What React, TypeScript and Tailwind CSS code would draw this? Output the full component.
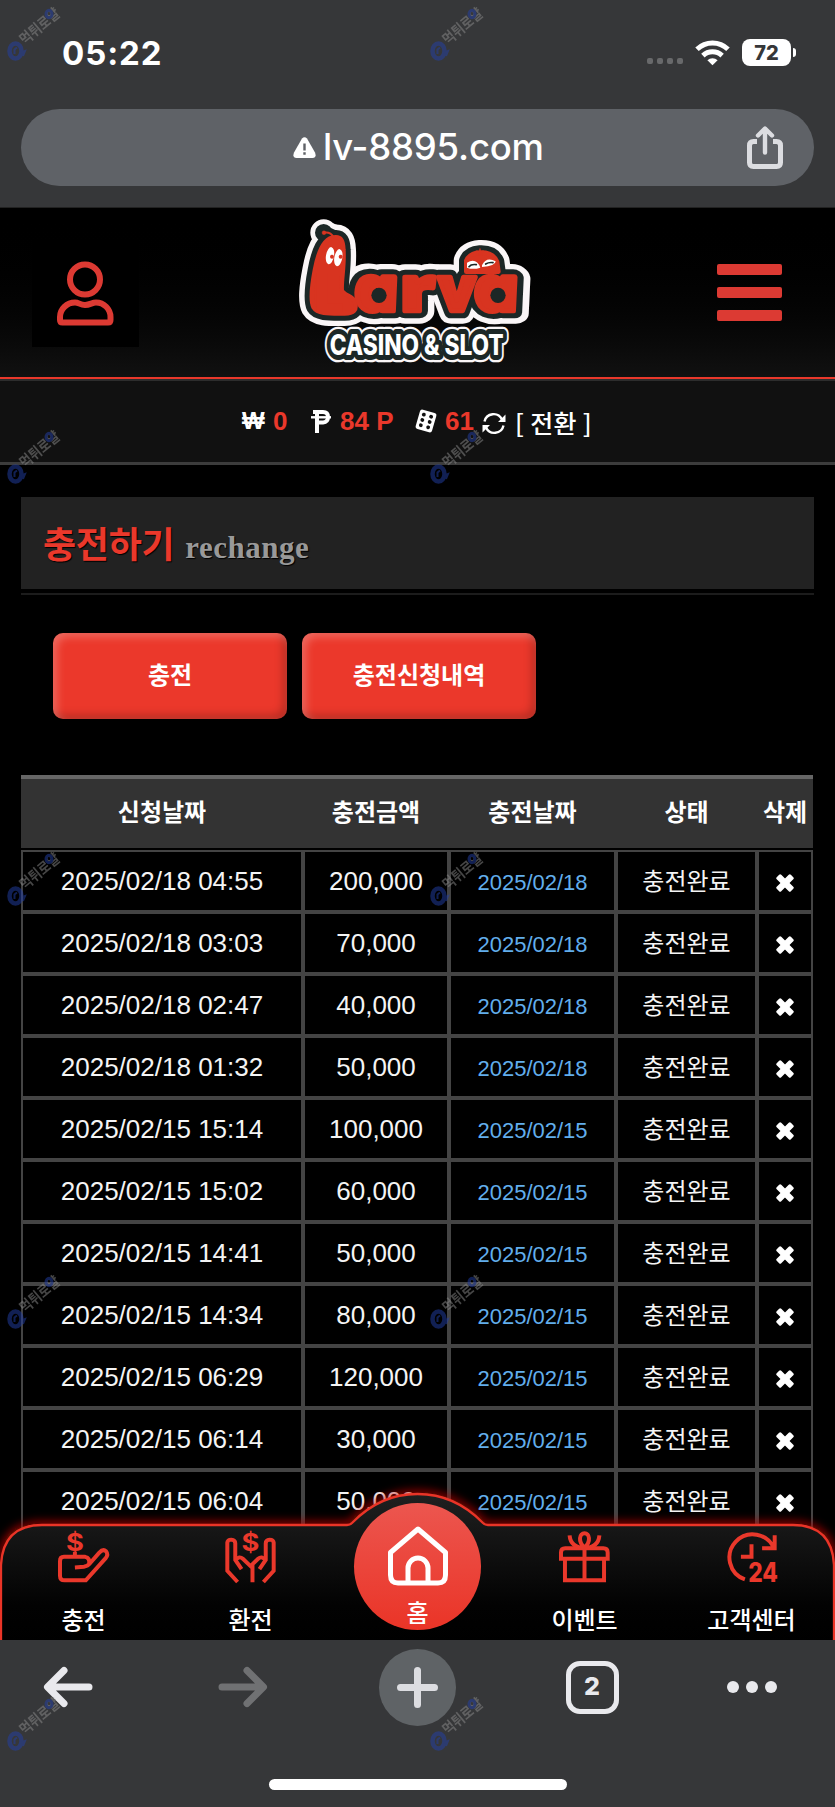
import type { ReactNode } from 'react';

interface Deposit {
  requested: string;
  amount: string;
  date: string;
}

const DEPOSITS: Deposit[] = [
  { requested: '2025/02/18 04:55', amount: '200,000', date: '2025/02/18' },
  { requested: '2025/02/18 03:03', amount: '70,000', date: '2025/02/18' },
  { requested: '2025/02/18 02:47', amount: '40,000', date: '2025/02/18' },
  { requested: '2025/02/18 01:32', amount: '50,000', date: '2025/02/18' },
  { requested: '2025/02/15 15:14', amount: '100,000', date: '2025/02/15' },
  { requested: '2025/02/15 15:02', amount: '60,000', date: '2025/02/15' },
  { requested: '2025/02/15 14:41', amount: '50,000', date: '2025/02/15' },
  { requested: '2025/02/15 14:34', amount: '80,000', date: '2025/02/15' },
  { requested: '2025/02/15 06:29', amount: '120,000', date: '2025/02/15' },
  { requested: '2025/02/15 06:14', amount: '30,000', date: '2025/02/15' },
  { requested: '2025/02/15 06:04', amount: '50,000', date: '2025/02/15' },
];

const COLUMNS = 'grid grid-cols-[282px_146px_167px_141px_56px]';

function StatusBar() {
  return (
    <div className="flex h-[109px] items-start justify-between pl-[62px] pr-[39px] pt-[34px] font-['Inter']">
      <span className="text-[33px] font-bold leading-[38px] tracking-[0.9px] text-white">05:22</span>
      <div className="flex items-center pt-[5px]">
        <div className="mr-[12px] mt-[17px] flex gap-[3.5px]">
          {[0, 1, 2, 3].map((i) => (
            <i key={i} className="size-[6.5px] rounded-[2px] bg-[#68696b]" />
          ))}
        </div>
        <svg className="mr-[12px] h-[26px] w-[35px]" viewBox="0 0 35 26" fill="none" stroke="#fff" strokeWidth="5">
          <path d="M2 9.2a22.3 22.3 0 0 1 31 0" />
          <path d="M7.9 15.6a14 14 0 0 1 19.2 0" />
          <path d="M17.5 25.3 12.4 20.2a7.4 7.4 0 0 1 10.2 0Z" fill="#fff" stroke="none" />
        </svg>
        <div className="flex h-[27px] w-[49px] items-center justify-center rounded-[8px] bg-white text-[20px] font-extrabold text-[#363739]">
          72
        </div>
        <i className="ml-[2px] h-[9px] w-[3px] rounded-r-full bg-white" />
      </div>
    </div>
  );
}

function AddressBar() {
  return (
    <div className="mx-[21px] flex h-[77px] items-center rounded-full bg-[#5f6267] pr-[30px] font-['Inter']">
      <svg className="ml-[272px] h-[21px] w-[23px]" viewBox="0 0 23 21">
        <path d="M9 1.5Q11.5-1 14 1.5L22 15.5Q24 20.500 19.500 21H3.500Q-1 20.500 1 15.500Z" fill="#fff" />
        <path d="M11.500 6.500v7M11.500 15.300v2.400" stroke="#5f6267" strokeWidth="2.400" />
      </svg>
      <span className="ml-[7px] text-[36.500px] font-medium leading-none tracking-[-0.2px] text-white">lv-8895.com</span>
      <svg className="ml-auto h-[44px] w-[38px]" viewBox="0 0 38 44" fill="none" stroke="#dcdde1" strokeWidth="5" strokeLinecap="round" strokeLinejoin="round">
        <path d="M19 26.500V4M12 9.500l7-7 7 7" strokeWidth="4.400" />
        <path d="M11 15.500H7.500Q3.500 15.500 3.500 19.500v17Q3.500 40.500 7.500 40.500h23Q34.500 40.500 34.500 36.500v-17Q34.500 15.500 30.500 15.500H27" strokeLinecap="butt" />
      </svg>
    </div>
  );
}

function Logo() {
  return (
    <svg className="h-[150px] w-[240px]" viewBox="55 48 720 450" strokeLinejoin="round" strokeLinecap="round">
      <defs>
        {/* shared by the white, dark and red layers */}
        <g id="larva">
          <path d="M165 112C132 114 116 155 106 210C96 262 92 302 102 322C114 342 150 340 195 340C222 340 232 330 226 306C219 286 190 287 186 270C184 240 194 200 191 150C190 122 184 110 165 112Z" />
          <path d="M560 215V182Q570 160 600 158Q640 156 652 185L656 215Z" />
          <g fontFamily="'Open Sans', sans-serif" fontWeight="800" fontSize="186">
            <text transform="translate(233 334) skewX(12)" fontStyle="italic" textLength="136" lengthAdjust="spacingAndGlyphs">a</text>
            <text x="362" y="334" textLength="104" lengthAdjust="spacingAndGlyphs">r</text>
            <text x="476" y="334" textLength="112" lengthAdjust="spacingAndGlyphs">v</text>
            <text transform="translate(591 334) skewX(12)" fontStyle="italic" textLength="138" lengthAdjust="spacingAndGlyphs">a</text>
          </g>
        </g>
        <text id="slot" x="150" y="466" fontFamily="Inter" fontWeight="800" fontSize="86" textLength="522" lengthAdjust="spacingAndGlyphs">
          CASINO &amp; SLOT
        </text>
      </defs>
      <g fill="#faf6f7" stroke="#faf6f7">
        <use href="#larva" strokeWidth="76" />
        <circle cx="132" cy="98" r="18" strokeWidth="44" />
        <path d="M132 98L165 112" strokeWidth="74" />
        <use href="#slot" strokeWidth="44" />
      </g>
      <g fill="#1c2726" stroke="#1c2726">
        <use href="#larva" strokeWidth="44" />
        <circle cx="132" cy="98" r="12" strokeWidth="28" />
        <path d="M132 98L162 112" strokeWidth="44" />
        <use href="#slot" strokeWidth="30" />
      </g>
      <g fill="#d83420" stroke="#d83420">
        <use href="#larva" strokeWidth="14" />
        <path d="M133 98Q152 94 162 112" fill="none" strokeWidth="6" />
        <circle cx="133" cy="98" r="6" />
      </g>
      <text x="104" y="335" fontFamily="Inter" fontWeight="900" fontSize="160" fill="#d83420">L</text>
      <circle cx="298" cy="286" r="23" fill="#1c2726" />
      <circle cx="655" cy="286" r="23" fill="#1c2726" />
      <use href="#slot" fill="#fff" />
      {/* eyes */}
      <ellipse cx="151" cy="167" rx="12" ry="26" fill="#fff" transform="rotate(10 151 167)" />
      <ellipse cx="176" cy="173" rx="12" ry="26" fill="#fff" transform="rotate(10 176 173)" />
      <circle cx="157" cy="170" r="6" fill="#d83420" />
      <circle cx="183" cy="170" r="6" fill="#d83420" />
      <path d="M562 188Q590 172 602 203Q580 210 562 203Z" fill="#fff" />
      <path d="M607 196Q620 168 648 184Q648 198 607 201Z" fill="#fff" />
      <path d="M592 153l2 12M601 147v18M610 153l-4 12" stroke="#d83420" strokeWidth="4" />
      <path d="M568 200Q574 192 590 194M618 192Q628 186 640 188" stroke="#1c2726" strokeWidth="5" fill="none" />
    </svg>
  );
}

function Header() {
  return (
    <header className="flex h-[169px] items-start bg-linear-to-b from-black to-[#111] pl-[32px]">
      <div className="mt-[32px] size-[107px] bg-black">
        <svg viewBox="0 0 107 107" fill="none" stroke="#dc3a33" strokeWidth="6">
          <circle cx="53" cy="39.500" r="15" />
          <path d="M28 80V77C28 69 35 62.500 43 62.500C47 62.500 48 65 53 65C58 65 60 62.500 64 62.500C72 62.500 78.500 69 78.500 77V80Q78.500 82.500 76 82.500H30.500Q28 82.500 28 80Z" />
        </svg>
      </div>
      <div className="ml-[159px] mt-[8px]"><Logo /></div>
      <div className="ml-[179px] mt-[56px] flex flex-col gap-[12px]">
        <i className="h-[11px] w-[65px] rounded-[2px] bg-[#dc3a33]" />
        <i className="h-[11px] w-[65px] rounded-[2px] bg-[#dc3a33]" />
        <i className="h-[11px] w-[65px] rounded-[2px] bg-[#dc3a33]" />
      </div>
    </header>
  );
}

function Balance() {
  return (
    <div className="flex h-[88px] items-center border-b-[3px] border-t-2 border-b-[#3c3c3c] border-t-[#ea382b] bg-[#111] pl-[242px] pt-[1px] text-[26px] font-bold text-[#ea382b] shadow-[inset_0_2px_0_#2d2d2d]">
      <span className="w-[23px] text-[24px] text-white">₩</span>
      <span className="ml-[8px] w-[38px]">0</span>
      <svg className="h-[24px] w-[20px]" viewBox="0 0 20 24" fill="none" stroke="#fff" strokeWidth="4">
        <path d="M2 3H12Q17 3 17 8T12 13.500H6M6 3V24" />
        <path d="M0 8.300H20" strokeWidth="2.400" />
      </svg>
      <span className="ml-[9px] w-[75px]">84 P</span>
      <svg className="h-[24px] w-[22px]" viewBox="0 0 22 24">
        <g transform="rotate(16 11 12)">
          <rect x="2.500" y="2" width="17" height="20" rx="2.500" fill="#fff" />
          <g fill="#111">
            <circle cx="7.200" cy="6.500" r="1.900" /><circle cx="14.800" cy="6.500" r="1.900" />
            <circle cx="7.200" cy="12" r="1.900" /><circle cx="14.800" cy="12" r="1.900" />
            <circle cx="7.200" cy="17.500" r="1.900" /><circle cx="14.800" cy="17.500" r="1.900" />
          </g>
        </g>
      </svg>
      <span className="ml-[8px] w-[37px]">61</span>
      <svg className="mt-[4px] h-[23px] w-[24px]" viewBox="0 0 24 23" fill="none" stroke="#fff" strokeWidth="2.400">
        <path d="M2.500 9.500A9.300 9.300 0 0 1 20 7.500M21.500 13.500A9.300 9.300 0 0 1 4 15.500" />
        <path d="M23.500 2.500V10H16ZM.5 20.500V13H8Z" fill="#fff" stroke="none" />
      </svg>
      <span className="ml-[9px] pt-[3px] text-[25px] font-medium tracking-[0.3px] text-white font-['Noto_Sans_CJK_KR',sans-serif]">[ 전환 ]</span>
    </div>
  );
}

function ActionButton({ children }: { children: ReactNode }) {
  return (
    <button className="h-[86px] w-[234px] rounded-[10px] bg-[#eb382b] text-[24px] font-bold text-white shadow-[inset_4px_4px_8px_rgba(255,255,255,0.25),inset_-4px_-4px_8px_rgba(0,0,0,0.22)]">
      {children}
    </button>
  );
}

function DeleteIcon() {
  return (
    <svg className="mt-[3px] size-[18px]" viewBox="0 0 18 18" fill="#fff">
      <rect x="-1" y="5.800" width="20" height="6.400" rx="1.500" transform="rotate(45 9 9)" />
      <rect x="-1" y="5.800" width="20" height="6.400" rx="1.500" transform="rotate(-45 9 9)" />
    </svg>
  );
}

function DepositTable() {
  const cell = 'flex items-center justify-center border-2 border-[#444]';
  return (
    <div className="mx-[21px] mt-[56px] w-[792px]">
      <div className={`${COLUMNS} mb-[2px] h-[73px] items-center border-t-4 border-[#666] bg-[#333] pb-[1px] text-center text-[24px] font-bold text-white`}>
        <span>신청날짜</span>
        <span>충전금액</span>
        <span>충전날짜</span>
        <span>상태</span>
        <span>삭제</span>
      </div>
      {DEPOSITS.map((row) => (
        <div key={row.requested} className={`${COLUMNS} h-[62px] text-[26px] text-[#f4f4f4]`}>
          <div className={cell}>{row.requested}</div>
          <div className={cell}>{row.amount}</div>
          <div className={`${cell} pt-[3px] text-[22px] text-[#62aeec]`}>{row.date}</div>
          <div className={`${cell} pb-[2px] text-[24px] font-['Noto_Sans_CJK_KR',sans-serif]`}>충전완료</div>
          <div className={cell}><DeleteIcon /></div>
        </div>
      ))}
    </div>
  );
}

function NavIcon({ children }: { children: ReactNode }) {
  return (
    <svg className="h-[52px] w-[51px] overflow-visible" viewBox="0 0 154 155" fill="none" stroke="#ea382b" strokeWidth="12">
      {children}
    </svg>
  );
}

function Dollar({ x }: { x: number }) {
  return (
    <text x={x - 27} y="60" fill="#ea382b" stroke="none" fontFamily="Inter" fontWeight="700" fontSize="74" textLength="54" lengthAdjust="spacingAndGlyphs">$</text>
  );
}

function NavItem({ icon, label }: { icon: ReactNode; label: string }) {
  return (
    <div className="flex w-[167px] flex-col items-center pt-[38px]">
      {icon}
      <span className="mt-[18px] text-[24px] font-medium leading-[36px] text-white">{label}</span>
    </div>
  );
}

function BottomNav() {
  return (
    <nav className="absolute inset-x-0 bottom-0 h-[147px] font-['Noto_Sans_CJK_KR',sans-serif]">
      <svg className="absolute inset-0 h-[147px] w-[835px] overflow-visible" viewBox="0 0 835 147" fill="none">
        <defs>
          <linearGradient id="navFill" x1="0" y1="0" x2="0" y2="1">
            <stop offset="0" stopColor="#202020" />
            <stop offset="0.750" stopColor="#020202" />
            <stop offset="1" stopColor="#000" />
          </linearGradient>
          <linearGradient id="homeFill" x1="0" y1="0" x2="0" y2="1">
            <stop offset="0" stopColor="#ec564f" />
            <stop offset="1" stopColor="#ea3427" />
          </linearGradient>
          <filter id="glow" x="-5%" y="-30%" width="110%" height="160%">
            <feGaussianBlur stdDeviation="5" />
          </filter>
        </defs>
        <path d="M1 147V72Q3 32 42 32H347Q350 32 352 30Q380 1 417.500 1T483 30Q485 32 488 32H793Q832 32 834 72V147" stroke="#c01000" strokeWidth="6" filter="url(#glow)" />
        <path d="M1 150V72Q3 32 42 32H347Q350 32 352 30Q380 1 417.500 1T483 30Q485 32 488 32H793Q832 32 834 72V150" fill="url(#navFill)" stroke="#ea3427" strokeWidth="2.300" />
        <circle cx="417.500" cy="73.500" r="63.500" fill="url(#homeFill)" />
      </svg>
      <div className="relative flex">
        <NavItem
          label="충전"
          icon={
            <NavIcon>
              <Dollar x={51} />
              <path d="M51 109L78 107Q90 105 98 95L124 65Q136 52 145 60Q153 70 144 81L84 148H20Q6 148 6 134V90Q6 77 18 77H82Q97 80 94 98M51 62V77" />
            </NavIcon>
          }
        />
        <NavItem
          label="환전"
          icon={
            <NavIcon>
              <Dollar x={77} />
              <path d="M38 153L7 119V34Q8 25 19 25Q31 26 31 36V86L50 114M116 153L147 119V34Q146 25 135 25Q123 26 123 36V86L104 114" />
              <path d="M32 86Q43 73 54 83L77 105L100 83Q111 73 122 86M83 154V100" />
            </NavIcon>
          }
        />
        <div className="flex w-[167px] flex-col items-center pt-[33px]">
          <svg className="h-[60px] w-[60px]" viewBox="0 0 60 60" fill="none" stroke="#fff" strokeWidth="5" strokeLinejoin="round">
            <path d="M2.500 26.500L30 3L57.500 26.500V49Q57.500 57 50 57H10Q2.500 57 2.500 49Z" />
            <path d="M20 57V42A10 10 0 0 1 40 42V57" />
          </svg>
          <span className="mt-[8px] text-[24px] font-medium leading-[36px] text-white">홈</span>
        </div>
        <NavItem
          label="이벤트"
          icon={
            <NavIcon>
              <path d="M6 83V64Q6 51 19 51H134Q147 51 147 64V83ZM18 83V148H136V83M77 51V148" />
              <path d="M77 49C56 30 62 6 77 6S98 30 77 49ZM32 12C34 38 50 49 77 51C104 49 120 38 122 12" />
            </NavIcon>
          }
        />
        <NavItem
          label="고객센터"
          icon={
            <NavIcon>
              <path d="M57 145A70 70 0 1 1 145 52M147 12V51H109M77 39V77H45" />
              <text x="67" y="154" fill="#ea382b" stroke="none" fontFamily="Inter" fontWeight="800" fontSize="80" textLength="90" lengthAdjust="spacingAndGlyphs">24</text>
            </NavIcon>
          }
        />
      </div>
    </nav>
  );
}

function BrowserToolbar() {
  return (
    <footer className="flex h-[167px] flex-col items-center bg-[#363739]">
      <div className="grid h-[94px] w-full grid-cols-5 items-center justify-items-center">
        <svg className="ml-[-31px] h-[42px] w-[50px]" viewBox="0 0 50 42" fill="none" stroke="#e9e9ed" strokeWidth="7" strokeLinecap="round" strokeLinejoin="round">
          <path d="M46 21H5M21 4.500L4.500 21L21 37.500" />
        </svg>
        <svg className="ml-[-15px] h-[42px] w-[50px]" viewBox="0 0 50 42" fill="none" stroke="#707173" strokeWidth="7" strokeLinecap="round" strokeLinejoin="round">
          <path d="M4 21H45M29 4.500L45.500 21L29 37.500" />
        </svg>
        <div className="grid size-[77px] place-items-center rounded-full bg-[#5f6366]">
          <svg className="size-[41px]" viewBox="0 0 41 41" stroke="#dcdde1" strokeWidth="7" strokeLinecap="round">
            <path d="M20.500 3.500V37.500M3.500 20.500H37.500" />
          </svg>
        </div>
        <div className="ml-[15px] grid size-[53px] place-items-center rounded-[14px] border-[5.500px] border-[#e9e9ed] font-['Inter'] text-[25px] font-extrabold text-[#e9e9ed]">
          2
        </div>
        <div className="flex gap-[7px]">
          <i className="size-[12px] rounded-full bg-[#e9e9ed]" />
          <i className="size-[12px] rounded-full bg-[#e9e9ed]" />
          <i className="size-[12px] rounded-full bg-[#e9e9ed]" />
        </div>
      </div>
      <div className="mt-[45px] h-[11px] w-[298px] rounded-full bg-white" />
    </footer>
  );
}

function Watermark() {
  return (
    <svg className="h-[70px] w-[70px]" viewBox="0 0 70 70" fill="none">
      <g opacity="0.500">
        <ellipse cx="15.500" cy="51" rx="6" ry="7.500" stroke="#2340a8" strokeWidth="4.500" />
        <path d="M14.500 54V49.500L17 47.500M20 53l5-2-2 5" stroke="#2340a8" strokeWidth="2" />
        <text x="25" y="45.500" transform="rotate(-40 25 45.500)" fill="#8c8c8c" fontSize="15" fontWeight="700" textLength="47" lengthAdjust="spacingAndGlyphs" fontFamily="'Noto Sans CJK KR', sans-serif">
          먹튀로얄
        </text>
        <ellipse cx="49" cy="14" rx="3" ry="3.800" stroke="#2340a8" strokeWidth="3" />
      </g>
    </svg>
  );
}

export default function App() {
  return (
    <div className="relative flex h-[1807px] w-[835px] flex-col overflow-hidden bg-black font-['Liberation_Sans','Noto_Sans_CJK_KR',sans-serif]">
      <div className="h-[208px] shrink-0 border-b border-[#222] bg-[#363739]">
        <StatusBar />
        <AddressBar />
      </div>

      <main className="relative h-[1432px] shrink-0 overflow-hidden">
        <Header />
        <Balance />
        <div className="mx-[21px] mt-[32px] flex h-[92px] items-center bg-[#222] pl-[22px] pt-[6px]">
          <h1 className="flex items-baseline font-bold">
            <span className="text-[36px] leading-none tracking-[-0.3px] text-[#ea382b] [text-shadow:1px_1px_1px_#000]">충전하기</span>
            <span className="ml-[11px] font-['Liberation_Serif',serif] text-[31px] leading-none tracking-[0.500px] text-[#999] [text-shadow:1px_1px_1px_#000]">
              rechange
            </span>
          </h1>
        </div>
        <div className="mx-[21px] mt-[4px] h-[2px] bg-[#1c1c1c]" />
        <div className="ml-[53px] mt-[38px] flex gap-[15px]">
          <ActionButton>충전</ActionButton>
          <ActionButton>충전신청내역</ActionButton>
        </div>
        <DepositTable />
        <BottomNav />
      </main>

      <BrowserToolbar />

      <div className="pointer-events-none absolute left-0 top-0 grid grid-cols-[423px_70px] auto-rows-[422.500px]">
        {Array.from({ length: 10 }, (_, i) => (
          <Watermark key={i} />
        ))}
      </div>
    </div>
  );
}
